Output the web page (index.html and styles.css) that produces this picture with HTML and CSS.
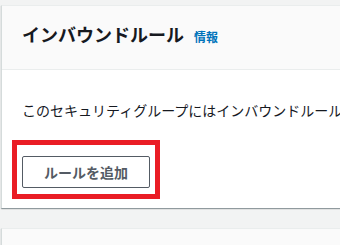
FILE: index.html
```html
<!DOCTYPE html>
<html lang="ja">
<head>
<meta charset="utf-8">
<link rel="stylesheet" href="styles.css">
</head>
<body>
<div class="page">
  <section class="card">
    <header class="card-header">
      <h2 class="title">インバウンドルール</h2>
      <a class="info" href="#">情報</a>
    </header>
    <div class="card-body">
      <p class="message">このセキュリティグループにはインバウンドルールがありません。</p>
      <div class="action">
        <button class="btn" type="button">ルールを追加</button>
        <span class="highlight"></span>
      </div>
    </div>
  </section>
  <section class="card">
    <header class="card-header card-header-empty"></header>
  </section>
</div>
</body>
</html>
```

FILE: styles.css
```css
html, body {
  margin: 0;
  padding: 0;
  overflow: hidden;
  background: #f2f3f3;
  font-family: "Noto Sans CJK JP", "Noto Sans", sans-serif;
  color: #16191f;
}

.page {
  width: 700px;
  padding: 5px 0 0 1px;
  display: flex;
  flex-direction: column;
  gap: 20px;
}

.card {
  background: #ffffff;
  border-top: 1px solid #eaeded;
  border-left: 1px solid #d5dbdb;
  box-shadow: 0 1px 1px 0 rgba(0, 28, 36, 0.3), 1px 1px 1px 0 rgba(0, 28, 36, 0.15);
}

.card-header {
  background: #fafafa;
  border-bottom: 1px solid #eaeded;
  padding: 17px 20px 24px;
  display: flex;
  align-items: baseline;
  gap: 10px;
}

.card-header-empty {
  height: 22px;
}

.title {
  margin: 0;
  font-size: 18px;
  line-height: 22px;
  font-weight: 700;
  color: #16191f;
}

.info {
  font-size: 12px;
  line-height: 16px;
  font-weight: 700;
  color: #0073bb;
  text-decoration: none;
}

.card-body {
  padding: 30px 20px 20px;
}

.message {
  margin: 0 0 36px;
  font-size: 14px;
  line-height: 20px;
  white-space: nowrap;
}

.action {
  position: relative;
  display: inline-block;
}

.btn {
  display: block;
  height: 32px;
  padding: 0 21px;
  border: 1px solid #545b64;
  border-radius: 2px;
  background: #ffffff;
  color: #545b64;
  font-family: "Noto Sans CJK JP", "Noto Sans", sans-serif;
  font-size: 14px;
  font-weight: 700;
  line-height: 20px;
}

.highlight {
  position: absolute;
  left: -10px;
  top: -16px;
  width: 148px;
  height: 59px;
  box-sizing: border-box;
  border: 5px solid #ea1d25;
  pointer-events: none;
}
```
